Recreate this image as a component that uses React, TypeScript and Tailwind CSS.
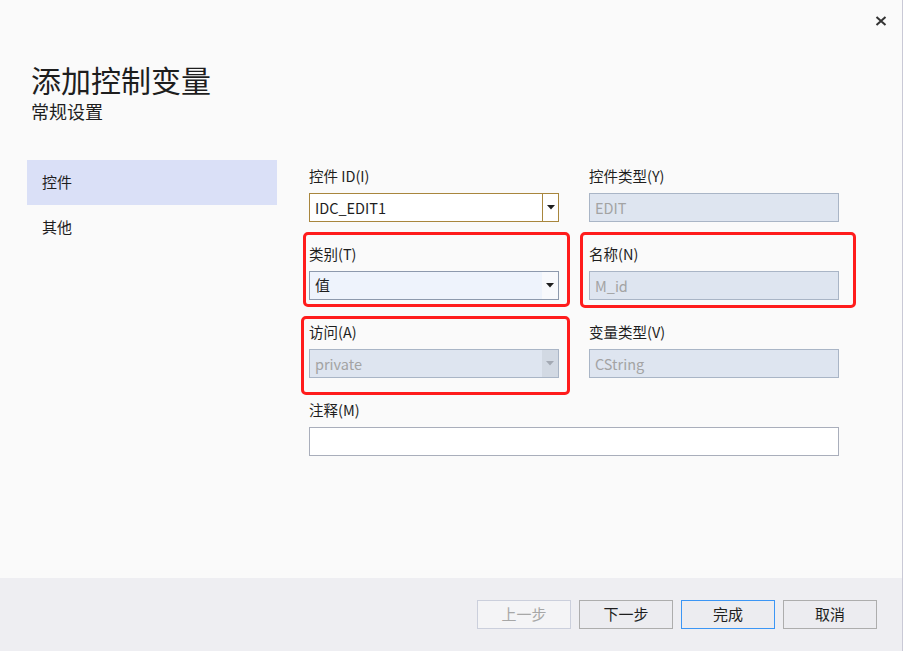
import type { ReactNode } from 'react'

const font = { fontFamily: '"Noto Sans CJK SC", "Noto Sans", sans-serif' }

function Arrow({ muted }: { muted?: boolean }) {
  return (
    <svg width="8" height="5" viewBox="0 0 8 5">
      <path d="M0 0 H8 L4 4.5 Z" fill={muted ? '#a3a9b3' : '#1e1e1e'} />
    </svg>
  )
}

function Field({ label, children }: { label: string; children: ReactNode }) {
  return (
    <div className="flex flex-col">
      <div className="h-[20px] text-[14.5px] leading-[20px] text-[#1e1e1e]">{label}</div>
      <div className="mt-[7px]">{children}</div>
    </div>
  )
}

function Disabled({ value }: { value: string }) {
  return (
    <div className="flex h-[29px] items-center border border-[#a9b5c6] bg-[#dee5f0] pl-[5px] text-[14.5px] text-[#a3a3a3]">
      {value}
    </div>
  )
}

function Marked({ children, box }: { children: ReactNode; box: string }) {
  return (
    <div className="relative">
      {children}
      <div className={`pointer-events-none absolute rounded-[5px] border-[3px] border-[#ff1c1c] ${box}`} />
    </div>
  )
}

function Button({ label, kind }: { label: string; kind?: 'disabled' | 'primary' }) {
  const cls =
    kind === 'disabled'
      ? 'border-[#cbcfdc] bg-[#f4f4f6] text-[#a7a7a7]'
      : kind === 'primary'
        ? 'border-[#3c96f5] bg-[#ececf0] text-[#1e1e1e]'
        : 'border-[#adadad] bg-[#ececf0] text-[#1e1e1e]'
  return (
    <button
      type="button"
      className={`flex h-[29px] w-[94px] items-center justify-center border text-[15px] ${cls}`}
    >
      {label}
    </button>
  )
}

export default function App() {
  return (
    <div
      style={font}
      className="flex h-[651px] w-[903px] flex-col border-r border-[#c9c9d6] bg-[#fafafa] text-[#1e1e1e]"
    >
      <div className="flex-1">
        <div className="flex justify-end pt-[16px] pr-[15px]">
          <svg width="12" height="10" viewBox="0 0 12 10">
            <path d="M1.5 1 L10.5 9 M10.5 1 L1.5 9" stroke="#333" strokeWidth="2" />
          </svg>
        </div>
        <h1 className="ml-[31px] mt-[36px] text-[30px] leading-[34px] font-normal text-[#1e1e1e]">
          添加控制变量
        </h1>
        <p className="ml-[31px] mt-[4px] text-[18px] leading-[22px]">常规设置</p>

        <div className="mt-[38px] flex">
          <div className="ml-[27px] w-[250px] text-[15px]">
            <div className="flex h-[45px] items-center bg-[#dae0f7] pl-[15px]">控件</div>
            <div className="flex h-[45px] items-center pl-[15px]">其他</div>
          </div>

          <div className="ml-[32px] mt-[6px] grid grid-cols-[250px_250px] gap-x-[30px] gap-y-[22px]">
            <Field label="控件 ID(I)">
              <div className="flex h-[29px] border border-[#a8863d] bg-white">
                <div className="flex flex-1 items-center pl-[5px] text-[14.5px]">IDC_EDIT1</div>
                <div className="flex w-[16px] items-center justify-center border-l border-[#a8863d]">
                  <Arrow />
                </div>
              </div>
            </Field>
            <Field label="控件类型(Y)">
              <Disabled value="EDIT" />
            </Field>

            <Marked box="-top-[12px] -left-[6px] -right-[11px] -bottom-[7px]">
              <Field label="类别(T)">
                <div className="flex h-[29px] border border-[#8d99ad] bg-[#eef3fc]">
                  <div className="flex flex-1 items-center pl-[5px] text-[15px]">值</div>
                  <div className="flex w-[16px] items-center justify-center bg-[#f8f9fc]">
                    <Arrow />
                  </div>
                </div>
              </Field>
            </Marked>
            <Marked box="-top-[12px] -left-[9px] -right-[17px] -bottom-[8px]">
              <Field label="名称(N)">
                <Disabled value="M_id" />
              </Field>
            </Marked>

            <Marked box="-top-[6px] -left-[8px] -right-[11px] -bottom-[17px]">
              <Field label="访问(A)">
                <div className="flex h-[29px] border border-[#a9b5c6] bg-[#dee5f0]">
                  <div className="flex flex-1 items-center pl-[5px] text-[14.5px] text-[#a3a3a3]">private</div>
                  <div className="flex w-[16px] items-center justify-center bg-[#d2d9e3]">
                    <Arrow muted />
                  </div>
                </div>
              </Field>
            </Marked>
            <Field label="变量类型(V)">
              <Disabled value="CString" />
            </Field>

            <div className="col-span-2">
              <Field label="注释(M)">
                <div className="h-[29px] w-[530px] border border-[#a9aebb] bg-white" />
              </Field>
            </div>
          </div>
        </div>
      </div>

      <div className="flex h-[73px] items-start justify-end gap-[8px] bg-[#eeeef2] pt-[22px] pr-[25px]">
        <Button label="上一步" kind="disabled" />
        <Button label="下一步" />
        <Button label="完成" kind="primary" />
        <Button label="取消" />
      </div>
    </div>
  )
}
